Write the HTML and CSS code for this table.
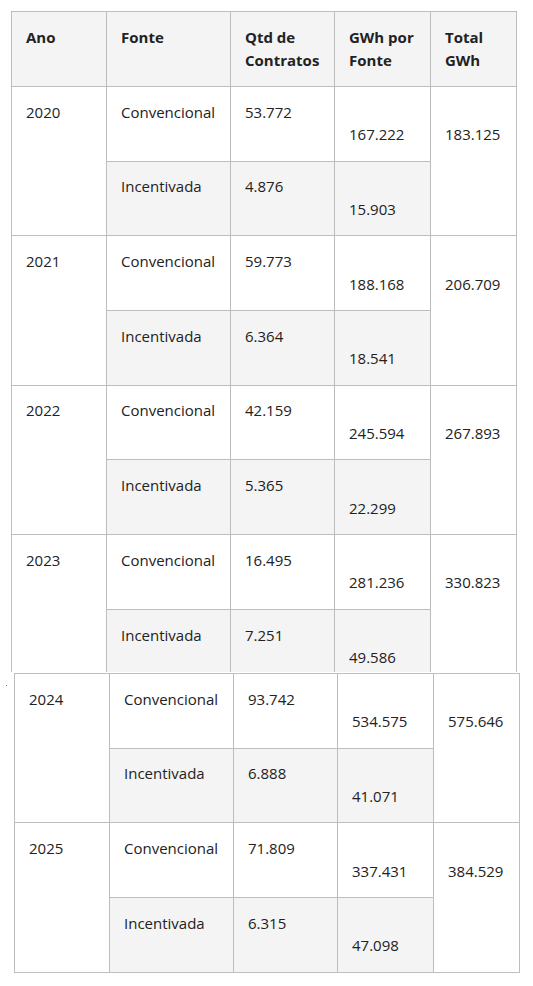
FILE: index.html
```html
<!DOCTYPE html>
<html lang="pt-BR">
<head>
<meta charset="utf-8">
<title>Contratos por fonte</title>
<link rel="stylesheet" href="styles.css">
</head>
<body>
<div class="page">
  <div class="clip">
    <table class="data">
      <colgroup><col class="c1"><col class="c2"><col class="c3"><col class="c4"><col class="c5"></colgroup>
      <thead>
        <tr><th>Ano</th><th>Fonte</th><th>Qtd de<br>Contratos</th><th>GWh por<br>Fonte</th><th>Total<br>GWh</th></tr>
      </thead>
      <tbody>
        <tr><td rowspan="2">2020</td><td>Convencional</td><td>53.772</td><td><br>167.222</td><td rowspan="2"><br>183.125</td></tr>
        <tr class="alt"><td>Incentivada</td><td>4.876</td><td><br>15.903</td></tr>
        <tr><td rowspan="2">2021</td><td>Convencional</td><td>59.773</td><td><br>188.168</td><td rowspan="2"><br>206.709</td></tr>
        <tr class="alt"><td>Incentivada</td><td>6.364</td><td><br>18.541</td></tr>
        <tr><td rowspan="2">2022</td><td>Convencional</td><td>42.159</td><td><br>245.594</td><td rowspan="2"><br>267.893</td></tr>
        <tr class="alt"><td>Incentivada</td><td>5.365</td><td><br>22.299</td></tr>
        <tr><td rowspan="2">2023</td><td>Convencional</td><td>16.495</td><td><br>281.236</td><td rowspan="2"><br>330.823</td></tr>
        <tr class="alt"><td>Incentivada</td><td>7.251</td><td><br>49.586</td></tr>
      </tbody>
    </table>
  </div>
  <span class="dot"></span>
  <table class="data second">
    <colgroup><col class="c1"><col class="c2"><col class="c3"><col class="c4"><col class="c5"></colgroup>
    <tbody>
      <tr><td rowspan="2">2024</td><td>Convencional</td><td>93.742</td><td><br>534.575</td><td rowspan="2"><br>575.646</td></tr>
      <tr class="alt"><td>Incentivada</td><td>6.888</td><td><br>41.071</td></tr>
      <tr><td rowspan="2">2025</td><td>Convencional</td><td>71.809</td><td><br>337.431</td><td rowspan="2"><br>384.529</td></tr>
      <tr class="alt"><td>Incentivada</td><td>6.315</td><td><br>47.098</td></tr>
    </tbody>
  </table>
</div>
</body>
</html>
```

FILE: styles.css
```css
html, body {
  margin: 0;
  padding: 0;
  background: #ffffff;
}

.page {
  position: relative;
  font-family: "Open Sans", "Noto Sans", sans-serif;
  font-size: 15px;
  line-height: 22.5px;
  color: #222;
}

.clip {
  height: 672px;
  overflow: hidden;
  padding: 11px 0 0 11px;
  box-sizing: border-box;
}

.data {
  border-collapse: collapse;
  table-layout: fixed;
  width: 505px;
}

.second {
  margin: 1px 0 0 14px;
}

.c1 { width: 95px; }
.c2 { width: 124px; }
.c3 { width: 104px; }
.c4 { width: 96px; }
.c5 { width: 86px; }

.data th,
.data td {
  border: 1px solid #bdbdbd;
  padding: 13.7px 15px 15px 14px;
  text-align: left;
  vertical-align: top;
}

.data th {
  font-weight: 700;
  background: #f4f4f4;
  padding-top: 14px;
}

.data tr.alt td {
  background: #f4f4f4;
}

.dot {
  position: absolute;
  left: 6px;
  top: 685px;
  width: 1px;
  height: 1px;
  background: #777;
}
```
